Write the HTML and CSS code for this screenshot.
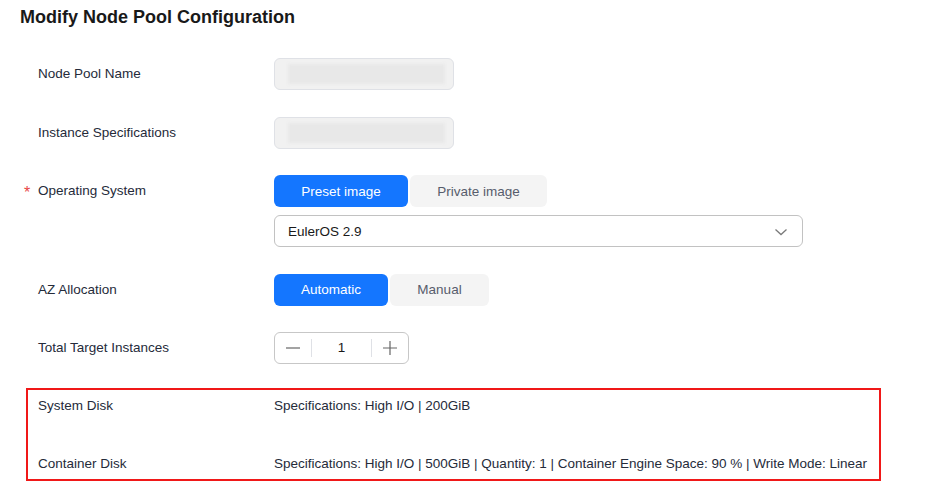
FILE: index.html
```html
<!DOCTYPE html>
<html>
<head>
<meta charset="utf-8">
<meta name="viewport" content="width=device-width, initial-scale=1.0">
<title>Modify Node Pool Configuration</title>
<link rel="stylesheet" href="styles.css">
</head>
<body>
    <div class="page">
        <h1 class="title">Modify Node Pool Configuration</h1>

        <div class="row">
            <div class="label">Node Pool Name</div>
            <div class="field">
                <div class="input disabled"><div class="blur"></div></div>
            </div>
        </div>

        <div class="row">
            <div class="label">Instance Specifications</div>
            <div class="field">
                <div class="input disabled"><div class="blur"></div></div>
            </div>
        </div>

        <div class="row">
            <div class="label"><span class="req">*</span>Operating System</div>
            <div class="field">
                <div class="seg">
                    <button class="seg-btn active wide">Preset image</button>
                    <button class="seg-btn wide2">Private image</button>
                </div>
                <div class="select">
                    <span>EulerOS 2.9</span>
                    <svg width="14" height="14" viewBox="0 0 14 14"><path d="M1.5 4.5 L7 9.5 L12.5 4.5" fill="none" stroke="#7a7a7a" stroke-width="1.3"/></svg>
                </div>
            </div>
        </div>

        <div class="row">
            <div class="label">AZ Allocation</div>
            <div class="field">
                <div class="seg">
                    <button class="seg-btn active az">Automatic</button>
                    <button class="seg-btn az2">Manual</button>
                </div>
            </div>
        </div>

        <div class="row last">
            <div class="label">Total Target Instances</div>
            <div class="field">
                <div class="stepper">
                    <span class="step-btn">
                        <svg width="14" height="14" viewBox="0 0 14 14"><path d="M0 7 H14" stroke="#666" stroke-width="1.2"/></svg>
                    </span>
                    <span class="step-val">1</span>
                    <span class="step-btn">
                        <svg width="14" height="14" viewBox="0 0 14 14"><path d="M0 7 H14 M7 0 V14" stroke="#666" stroke-width="1.2"/></svg>
                    </span>
                </div>
            </div>
        </div>

        <div class="disks">
            <div class="disk-row">
                <div class="label">System Disk</div>
                <div class="value">Specifications: High I/O | 200GiB</div>
            </div>
            <div class="disk-row">
                <div class="label">Container Disk</div>
                <div class="value">Specifications: High I/O | 500GiB | Quantity: 1 | Container Engine Space: 90 % | Write Mode: Linear</div>
            </div>
        </div>
    </div>
</body>
</html>
```

FILE: styles.css
```css
*{
    box-sizing: border-box;
    font-family: 'Liberation Sans', Arial, sans-serif;
}
body{
    margin:0;
    background:#fff;
    color:#252b3a;
}
.page{
    width:927px;
    padding:6px 0 0 20px;
}
.title{
    margin:0 0 30px 0;
    font-size:18px;
    line-height:22px;
    font-weight:bold;
    color:#191919;
}
.row{
    display:flex;
    margin-bottom:26.5px;
}
.row.last{
    margin-bottom:24px;
}
.label{
    width:254px;
    padding-left:18px;
    position:relative;
    font-size:13.5px;
    line-height:32px;
    color:#252b3a;
    flex-shrink:0;
}
.req{
    position:absolute;
    left:4px;
    top:2px;
    color:#e84646;
    font-size:16px;
}
.field{
    display:flex;
    flex-direction:column;
    gap:8px;
}
.input{
    width:180px;
    height:32px;
    border:1px solid #dfe1e6;
    border-radius:6px;
    padding:5px 8px 5px 13px;
}
.input.disabled{
    background:#f1f1f1;
}
.blur{
    height:20px;
    background:#e8e8e8;
    filter:blur(1.5px);
}
.seg{
    display:flex;
    gap:2px;
}
.seg-btn{
    height:32px;
    border:none;
    border-radius:6px;
    font-size:13.5px;
    background:#f4f4f4;
    color:#575d6c;
    cursor:pointer;
}
.seg-btn.active{
    background:#1476ff;
    color:#fff;
}
.wide{width:134px;}
.wide2{width:137px;}
.az{width:114px;}
.az2{width:99px;}
.select{
    width:529px;
    height:32px;
    border:1px solid #c2c2c2;
    border-radius:6px;
    display:flex;
    align-items:center;
    justify-content:space-between;
    padding:0 14px 0 13px;
    font-size:13.5px;
    color:#191919;
}
.select svg{
    margin-top:1px;
}
.stepper{
    width:135px;
    height:32px;
    border:1px solid #c7c7c7;
    border-radius:6px;
    display:flex;
    align-items:center;
}
.step-btn{
    width:36px;
    display:flex;
    justify-content:center;
}
.step-val{
    flex:1;
    height:18px;
    border-left:1px solid #dfe1e6;
    border-right:1px solid #dfe1e6;
    text-align:center;
    font-size:13.5px;
    line-height:18px;
    color:#191919;
}
.disks{
    width:855px;
    height:93px;
    margin-left:6px;
    border:2px solid #f01818;
    padding:6px 0 0 0;
}
.disk-row{
    display:flex;
    height:20px;
    margin-bottom:38px;
}
.disks .label{
    width:246px;
    padding-left:10px;
    line-height:20px;
}
.value{
    font-size:13.5px;
    line-height:20px;
    color:#252b3a;
    white-space:nowrap;
}
```
